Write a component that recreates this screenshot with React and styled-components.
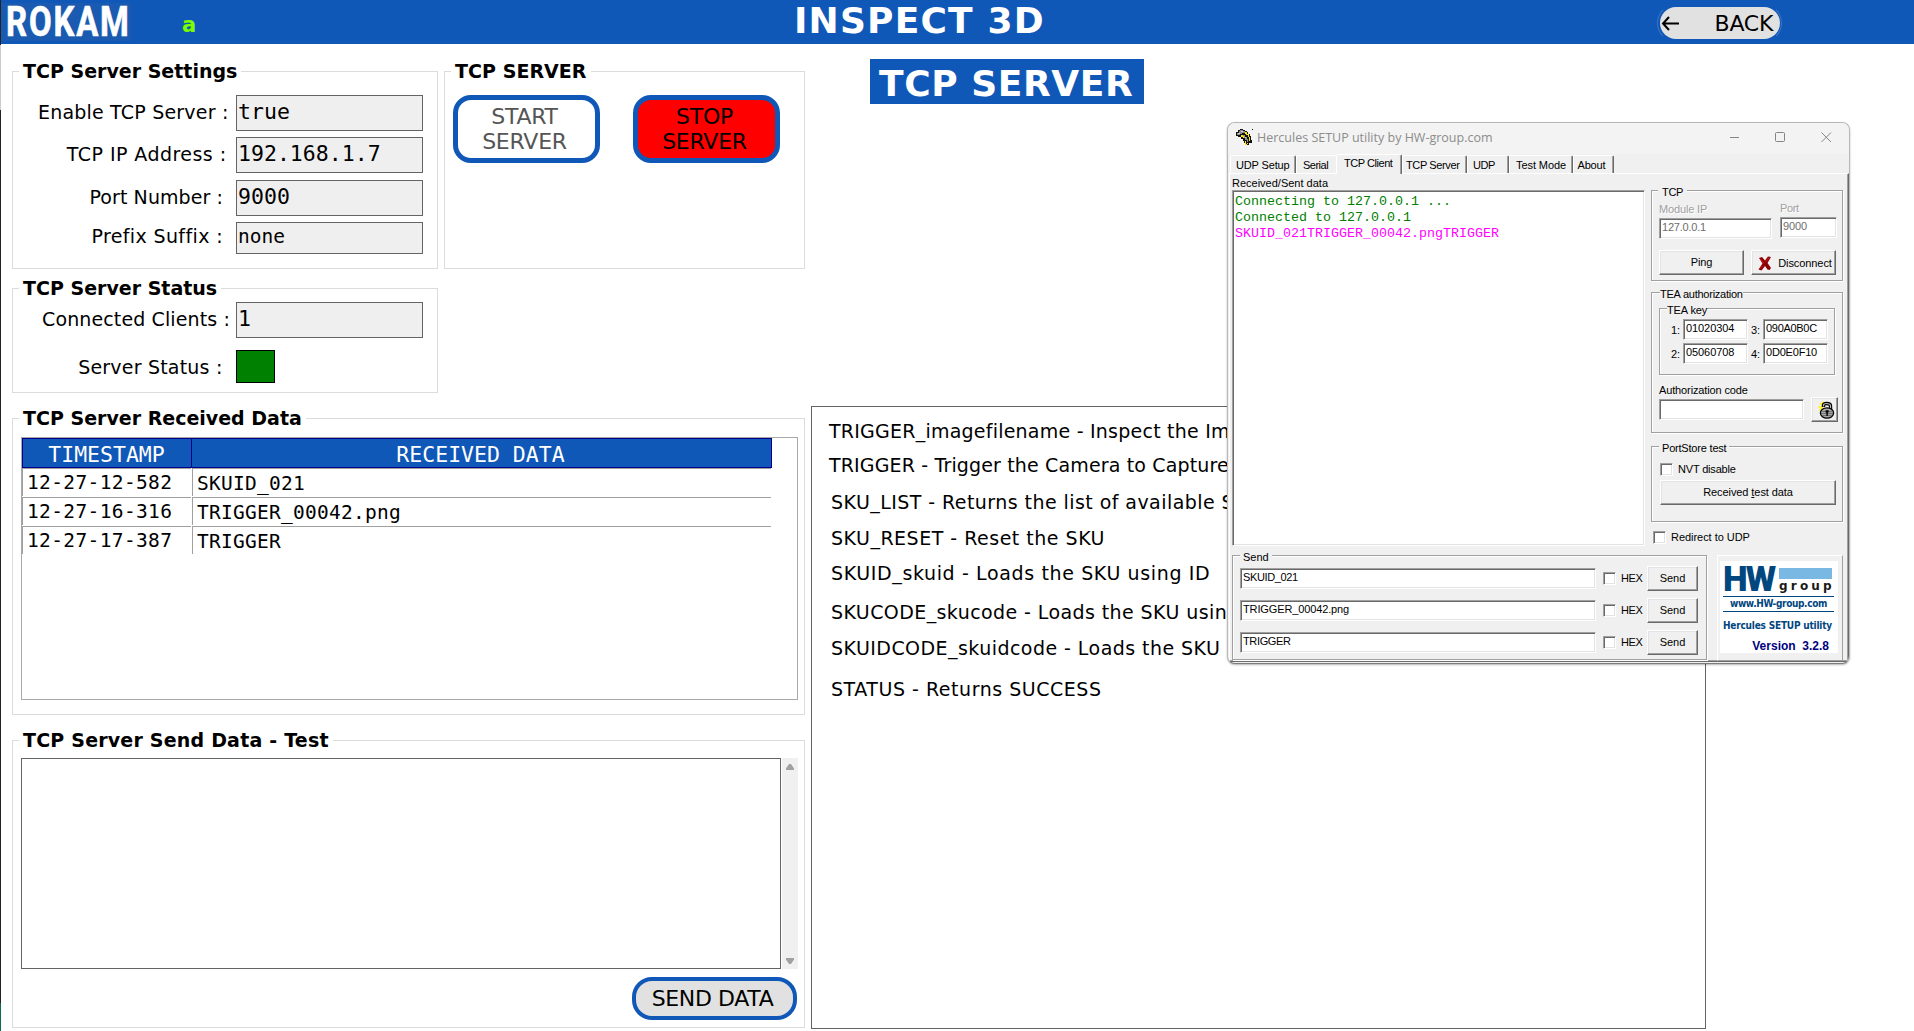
import React from 'react';
import styled, { createGlobalStyle, css } from 'styled-components';

const BLUE = '#1058b8';
const SANS = '"DejaVu Sans", Verdana, sans-serif';
const MONO = '"DejaVu Sans Mono", monospace';
const CLASSIC = '"Liberation Sans", Arial, sans-serif';

const GlobalStyle = createGlobalStyle`
  *, *::before, *::after { box-sizing: border-box; }
  body { margin: 0; background: #fff; color: #000; overflow: hidden; }
  button { margin: 0; padding: 0; font: inherit; color: inherit; }
`;

/* ---------- page frame ---------- */

const Screen = styled.div`
  position: relative;
  width: 1914px;
  height: 1031px;
  padding-left: 1px;
  display: flex;
  flex-direction: column;
  font-family: ${SANS};
  white-space: pre;
  background: linear-gradient(#222 0 45px, #ccc 45px 110px, #222 110px 1003px, #0b6b4f 1003px) 0 0 / 1px 100% no-repeat #fff;
`;

const Header = styled.header`
  display: grid;
  grid-template-columns: 181px 612px 863px auto;
  height: 44px;
  background: ${BLUE};
  color: #fff;
`;

const LogoPlate = styled.div`
  width: 130px;
  height: 38px;
  margin-top: 3px;
  padding-left: 4.5px;
  background: #1a5ab0;
`;

const LogoText = styled.div`
  font: 700 43px/37px Roboto, sans-serif;
  letter-spacing: 2.4px;
  transform: scaleX(0.765);
  transform-origin: left center;
  -webkit-text-stroke: 0.7px #fff;
`;

const UserMark = styled.div`
  font-size: 21px;
  font-weight: bold;
  line-height: 50px;
  color: #7cfc00;
`;

const AppTitle = styled.h1`
  margin: 0;
  font-size: 36px;
  line-height: 41px;
  letter-spacing: 1.2px;
`;

const BackRing = styled.div`
  width: 125px;
  height: 38px;
  margin-top: 4px;
  padding: 2px;
  border: 1px solid rgba(255, 255, 255, 0.12);
  border-color: transparent rgba(255, 255, 255, 0.18);
  border-radius: 19px;
`;

const BackButton = styled.button`
  display: flex;
  align-items: center;
  gap: 34.5px;
  width: 120px;
  height: 32px;
  border: 0;
  padding-left: 1px;
  border-radius: 16px;
  background: #e1e1e1;
  color: #000;
  font-size: 22px;
  letter-spacing: -0.2px;
`;

const Main = styled.main`
  display: grid;
  grid-template-columns: 793px 895px;
  column-gap: 6px;
  padding-left: 11px;
`;

const LeftColumn = styled.div`
  display: flex;
  flex-direction: column;
  gap: 25px;
  padding-top: 27px;
`;

const TopRow = styled.div`
  display: flex;
  align-items: flex-start;
  gap: 6px;
`;

const Stack = styled.div`
  display: flex;
  flex-direction: column;
  gap: 19px;
`;

const RightColumn = styled.div`
  display: flex;
  flex-direction: column;
  gap: 302px;
  padding-top: 15px;
`;

/* ---------- group boxes and form parts ---------- */

const Group = styled.section`
  display: flex;
  flex-direction: column;
  width: ${(p) => p.$w}px;
  height: ${(p) => p.$h}px;
  border: 1px solid #dcdcdc;
`;

const Legend = styled.h2`
  align-self: flex-start;
  margin: -13px 0 -11px 6px;
  padding: 0 4px;
  background: #fff;
  font-size: 19px;
  line-height: 24px;
  letter-spacing: ${(p) => p.$ls || 0}px;
`;

const FieldRow = styled.div`
  display: grid;
  grid-template-columns: 223px 187px;
  align-items: start;
  margin-top: ${(p) => p.$mt}px;
`;

const FieldLabel = styled.label`
  justify-self: end;
  padding-right: ${(p) => p.$pr}px;
  font-size: 19px;
  line-height: ${(p) => p.$lh || 34}px;
  letter-spacing: ${(p) => p.$ls}px;
`;

const ValueBox = styled.output`
  display: block;
  height: 36px;
  padding-left: 1px;
  border: 1px solid #646464;
  background: #efefef;
  font: 21.5px/31px ${MONO};
  letter-spacing: 0.02px;
  ${(p) => p.$small && css`
    height: 32px;
    font-size: 19.5px;
    line-height: 27px;
  `}
`;

const StatusLamp = styled.div`
  width: 39px;
  height: 33px;
  border: 1px solid #000;
  background: #008000;
`;

const ServerButtons = styled.div`
  display: flex;
  gap: 33px;
  padding: 23px 0 0 8px;
`;

const PillButton = styled.button`
  width: 147px;
  height: 68px;
  padding-right: 4px;
  border: 5px solid ${BLUE};
  border-radius: 18px;
  background: ${(p) => p.$bg || '#fff'};
  color: ${(p) => p.$fg || '#000'};
  font-size: 22px;
  line-height: 25px;
  letter-spacing: -0.25px;
`;

const SendDataButton = styled(PillButton)`
  align-self: flex-end;
  width: 165px;
  height: 43px;
  margin: 8px 7px 0 0;
  border-width: 4px;
  border-radius: 20px;
  letter-spacing: -0.36px;
`;

/* ---------- received data ---------- */

const DataGrid = styled.div`
  width: 777px;
  height: 263px;
  margin: 18px 0 0 8px;
  border: 1px solid #a8a8a8;
`;

const GridHead = styled.div`
  display: grid;
  grid-template-columns: 169px 1fr;
  width: 750px;
  height: 30px;
  border: 1px solid #00008b;
  background: ${BLUE};
  color: #fff;
  font: 21.5px/31px ${MONO};
  text-align: center;
`;

const HeadCell = styled.div`
  height: 28px;
  padding-right: 2px;
  & + & { border-left: 1px solid #00008b; margin-left: -1px; }
`;

const GridRow = styled.div`
  display: grid;
  grid-template-columns: 169px 579px;
  column-gap: 1px;
  height: 29px;
`;

const StampCell = styled.div`
  height: 28px;
  padding-left: 4px;
  border: solid #a0a0a0;
  border-width: 1px 0 0 1px;
  font: 19.5px/27px ${MONO};
  letter-spacing: 0.37px;
`;

const DataCell = styled(StampCell)`
  padding-left: 4px;
  line-height: 29px;
  letter-spacing: 0.26px;
`;

/* ---------- send data ---------- */

const EditorRow = styled.div`
  display: flex;
  gap: 1px;
  height: 211px;
  margin: 17px 0 0 8px;
`;

const Editor = styled.div`
  width: 760px;
  border: 1px solid #646464;
`;

const ScrollTrack = styled.div`
  display: flex;
  flex-direction: column;
  justify-content: space-between;
  align-items: center;
  width: 16px;
  padding: 6px 0 5px;
  background: #f0f0f0;
`;

/* ---------- command reference ---------- */

const PageBadge = styled.div`
  width: 274px;
  height: 45px;
  margin-left: 59px;
  padding-left: 9px;
  background: ${BLUE};
  color: #fff;
  font-size: 36px;
  font-weight: bold;
  line-height: 49px;
  letter-spacing: 0.6px;
`;

const CommandPanel = styled.section`
  height: 623px;
  border: 1px solid #646464;
  overflow: hidden;
`;

const Command = styled.p`
  margin: 0;
  padding-top: ${(p) => p.$gap}px;
  padding-left: ${(p) => p.$indent}px;
  font-size: 19px;
  line-height: 24px;
  letter-spacing: ${(p) => p.$ls}px;
`;

/* ---------- Hercules window ---------- */

const Window = styled.div`
  position: absolute;
  left: 1227px;
  top: 122px;
  width: 623px;
  height: 542px;
  border: 1px solid #b8b8b8;
  border-bottom-color: #7c7c7c;
  border-radius: 8px;
  overflow: hidden;
  background: #f0f0f0;
  font: 11px ${CLASSIC};
  box-shadow: 0 1px 2px rgba(0, 0, 0, 0.3);
`;

const TitleBar = styled.div`
  display: flex;
  align-items: flex-start;
  height: 31px;
  padding-left: 8px;
  background: #f3f3f3;
  & > svg { margin-top: 6px; }
`;

const WindowTitle = styled.div`
  flex: 1;
  padding-left: 4px;
  font: 12.5px/29px "Open Sans", sans-serif;
  color: #8c8c8c;
`;

const Caption = styled.button`
  display: flex;
  align-items: center;
  justify-content: center;
  width: 46px;
  height: 28px;
  border: 0;
  background: none;
  color: #858585;
`;

const TabBar = styled.div`
  display: flex;
  align-items: flex-end;
  height: 19px;
  padding-left: 2px;
`;

const Tab = styled.div`
  width: ${(p) => p.$w}px;
  height: 18px;
  padding-left: ${(p) => p.$pl}px;
  border: solid;
  border-color: #fff #696969 transparent #fff;
  border-width: 1px 1px 0 1px;
  border-radius: 2px 2px 0 0;
  box-shadow: inset -1px 0 #a0a0a0;
  line-height: 18px;
  letter-spacing: ${(p) => p.$ls}px;
  ${(p) => p.$open && css`
    height: 20px;
    margin-bottom: -1px;
    line-height: 16px;
    background: #f0f0f0;
    z-index: 1;
  `}
  ${(p) => p.$noEdge && css`
    border-right: 0;
    box-shadow: none;
  `}
`;

const Sheet = styled.div`
  width: 620px;
  height: 489px;
  margin-left: 1px;
  padding-left: 2px;
  border: solid;
  border-width: 1px 1px 1px 1px;
  border-color: #fff #696969 #696969 #fff;
  box-shadow: inset -1px -1px #a0a0a0;
`;

const SheetTop = styled.div`
  display: flex;
  gap: 7px;
  height: 381px;
`;

const SheetBottom = styled.div`
  display: flex;
  gap: 10px;
`;

const SideColumn = styled.div`
  display: flex;
  flex-direction: column;
  width: 191px;
  padding-top: 16px;
`;

const SmallText = styled.div`
  height: 16px;
  line-height: 16px;
  letter-spacing: ${(p) => p.$ls || 0}px;
`;

const MemoCaption = styled(SmallText)`
  line-height: 19px;
`;

const DimText = styled(SmallText)`
  color: #a0a0a0;
  text-shadow: 1px 1px #fff;
`;

const sunken = css`
  border: 1px solid;
  border-color: #a0a0a0 #fff #fff #a0a0a0;
  box-shadow: inset 1px 1px #696969, inset -1px -1px #e3e3e3;
  background: #fff;
`;

const Memo = styled.div`
  width: 413px;
  height: 356px;
  margin-right: -1px;
  padding: 3px 0 0 2px;
  ${sunken}
  font: 13.33px/16px "Liberation Mono", monospace;
`;

const MemoLine = styled.div`
  color: ${(p) => p.$c};
`;

const Input = styled.div`
  flex: none;
  width: ${(p) => p.$w}px;
  height: ${(p) => p.$h || 21}px;
  padding-left: 2px;
  ${sunken}
  color: ${(p) => (p.$dim ? '#6d6d6d' : '#000')};
  line-height: 17px;
  letter-spacing: ${(p) => p.$ls || 0}px;
`;

const Push = styled.button`
  display: flex;
  align-items: center;
  justify-content: center;
  gap: 6px;
  flex: none;
  width: ${(p) => p.$w}px;
  height: 25px;
  padding-bottom: 2px;
  border: 1px solid;
  border-color: #fff #696969 #696969 #fff;
  box-shadow: inset -1px -1px #a0a0a0, inset 1px 1px #e3e3e3;
  background: #f0f0f0;
  letter-spacing: -0.08px;
`;

const IconPush = styled(Push)`
  padding: 1px 0 0 3px;
`;

const Frame = styled.div`
  display: flex;
  flex-direction: column;
  align-items: flex-start;
  width: ${(p) => p.$w}px;
  height: ${(p) => p.$h}px;
  margin: ${(p) => p.$m || 0};
  border: 1px solid #a0a0a0;
  box-shadow: inset 1px 1px #fff, 1px 1px #fff;
`;

const FrameLegend = styled.div`
  margin: -7px 0 -9px ${(p) => p.$ml}px;
  padding: 0 ${(p) => p.$pad || 0}px;
  background: #f0f0f0;
  line-height: 16px;
  letter-spacing: ${(p) => p.$ls}px;
`;

const AddressRow = styled.div`
  display: flex;
  gap: 8px;
  padding: 10px 0 0 7px;
`;

const AddressCell = styled.div`
  display: flex;
  flex-direction: column;
  gap: 1px;
  margin-top: ${(p) => p.$mt || 0}px;
`;

const PushRow = styled.div`
  display: flex;
  gap: 7px;
  padding: 11px 0 0 7px;
`;

const KeyGrid = styled.div`
  display: grid;
  grid-template-columns: 12px 68px 12px 65px;
  grid-auto-rows: 21px;
  row-gap: 3px;
  padding: 10px 0 0 11px;
  line-height: 22px;
`;

const AuthRow = styled.div`
  display: flex;
  align-items: center;
  gap: 7px;
  margin: -1px 0 0 7px;
`;

const AuthLabel = styled(SmallText)`
  margin: 7px 0 0 7px;
`;

const CheckRow = styled.label`
  display: flex;
  align-items: center;
  gap: 5px;
  height: 13px;
  margin: ${(p) => p.$m || 0};
  line-height: 12px;
  letter-spacing: ${(p) => p.$ls || 0}px;
`;

const CheckText = styled.span`
  height: 13px;
`;

const Box = styled.span`
  width: 13px;
  height: 13px;
  ${sunken}
`;

const PortButton = styled(Push)`
  margin: 4px 0 0 8px;
  gap: 0;
`;

const SendLine = styled.div`
  display: grid;
  grid-template-columns: 363px 44px 51px;
  align-items: center;
  height: 25px;
  margin: ${(p) => (p.$first ? 10 : 7)}px 0 0 7px;
`;

const BrandPanel = styled.div`
  width: 126px;
  height: 106px;
  padding: 5px 0 0 2px;
  border: 1px solid;
  border-color: #fff #a0a0a0 #a0a0a0 #fff;
`;

const BrandCard = styled.div`
  width: 118px;
  height: 92px;
  background: #fff;
  color: #00467f;
  font: bold 10px "DejaVu Sans Condensed", "DejaVu Sans", sans-serif;
  font-stretch: condensed;
`;

const BrandTop = styled.div`
  display: flex;
  height: 35px;
  padding-left: 3px;
`;

const BrandLetters = styled.div`
  width: 56px;
  font: 900 35px/37px Roboto, sans-serif;
  letter-spacing: -1.8px;
`;

const BrandSide = styled.div`
  padding-top: 7px;
  font: bold 12px/14px "DejaVu Sans", sans-serif;
  letter-spacing: 3.2px;
  color: #1a1a1a;
`;

const BrandBar = styled.div`
  width: 53px;
  height: 11px;
  background: #7ab8e4;
`;

const BrandUrl = styled.div`
  width: 111px;
  height: 16px;
  margin-left: 3px;
  border: solid #00467f;
  border-width: 1px 0;
  line-height: 13px;
  letter-spacing: -0.35px;
  text-align: center;
`;

const BrandProduct = styled.div`
  height: 27px;
  padding-left: 3px;
  line-height: 27px;
  letter-spacing: -0.2px;
`;

const BrandVersion = styled.div`
  padding-right: 9px;
  font: bold 12px/14px ${CLASSIC};
  color: #000080;
  text-align: right;
`;

/* ---------- drawings ---------- */

const ArrowLeft = () => (
  <svg width="19" height="15" viewBox="0 0 19 15" fill="none" stroke="#000" strokeWidth="2">
    <path d="M8 1 L2 7.5 L8 14 M2 7.5 H18" />
  </svg>
);

const Triangle = ({ down }) => (
  <svg width="8" height="6" viewBox="0 0 8 6" fill="#a0a0a0">
    <path d={down ? 'M0 0H8V1.5L5 6H3L0 1.5Z' : 'M0 6H8V4.5L5 0H3L0 4.5Z'} />
  </svg>
);

const HerculesIcon = () => (
  <svg width="17" height="17" viewBox="0 0 17 17" shapeRendering="crispEdges">
    <path fill="#111" d="M4 0H7V1H9V2H11V3H12V5H14V7H15V11H16V14H13V16H9V14H8V12H7V10H5V8H2V7H0V3H2V1H4Z" />
    <path fill="#8c8c8c" d="M4 1H7V2H9V4H6V5H4V6H1V4H3V2H4ZM7 6H9V8H11V10H12V13H11V11H9V9H7Z" />
    <path fill="#ffe600" d="M9 3H11V5H13V8H12V6H10V5H9ZM5 6H7V7H8V9H7V8H5ZM13 8H14V12H13ZM9 12H10V15H11V14H12V15H11V16H9Z" />
    <path fill="#d0d0d0" d="M5 2H7V3H5ZM9 8H10V9H9ZM2 4H4V5H2Z" />
    <path fill="#111" d="M16 0H17V1H16Z" />
  </svg>
);

const RedCross = () => (
  <svg width="14" height="15" viewBox="0 0 14 15">
    <path fill="#8b0000" d="M1 2 L4 1 L7 4.5 L10 0.5 L13 1 L9.5 7 L13 12 L11.5 14 L9.5 13.5 L7 10 L3.5 14.5 L0.5 13.5 L4.5 7.5 Z" />
    <path fill="none" stroke="#d81818" strokeWidth="1" d="M2 2.5 L6 7.5 M11.5 1.5 L7.5 6 M5 9.5 L1.5 13" />
  </svg>
);

const LockIcon = () => (
  <svg width="17" height="18" viewBox="0 0 17 18">
    <path stroke="#ffee00" strokeWidth="1.3" d="M0.5 6 H5 M2 2 L5 5 M4.5 0.5 V4 M1 9.5 L4 7" />
    <path fill="none" stroke="#000" strokeWidth="3.4" d="M5.5 6 V4.5 Q5.5 2.5 8.5 2.5 Q12.5 2.5 12.5 5 V9" />
    <path fill="none" stroke="#b8b8b8" strokeWidth="1.2" d="M5.5 5.5 V4.5 Q5.5 2.5 8.5 2.5 Q12.5 2.5 12.5 5 V9" />
    <ellipse cx="9" cy="12" rx="6.6" ry="5.2" fill="#a8a8a8" stroke="#000" strokeWidth="1.3" />
    <path stroke="#666" strokeWidth="0.8" d="M3 10.5 H15 M3 12.5 H15 M4 14.5 H14" />
    <path fill="#000" d="M7.6 9.3 H10.6 V11.6 H9.8 V15 H8.4 V11.6 H7.6 Z" />
  </svg>
);

/* ---------- data ---------- */

const received = [
  ['12-27-12-582', 'SKUID_021'],
  ['12-27-16-316', 'TRIGGER_00042.png'],
  ['12-27-17-387', 'TRIGGER'],
];

const commands = [
  { text: 'TRIGGER_imagefilename - Inspect the Im', gap: 12, indent: 17, ls: 0.23 },
  { text: 'TRIGGER - Trigger the Camera to Capture', gap: 10, indent: 17, ls: 0.15 },
  { text: 'SKU_LIST - Returns the list of available S', gap: 13, indent: 19, ls: 0.44 },
  { text: 'SKU_RESET - Reset the SKU', gap: 12, indent: 19, ls: 0.5 },
  { text: 'SKUID_skuid - Loads the SKU using ID', gap: 11, indent: 19, ls: 0.63 },
  { text: 'SKUCODE_skucode - Loads the SKU usin', gap: 15, indent: 19, ls: 0.41 },
  { text: 'SKUIDCODE_skuidcode - Loads the SKU', gap: 12, indent: 19, ls: 0.45 },
  { text: 'STATUS - Returns SUCCESS', gap: 17, indent: 19, ls: 0.53 },
];

const tabs = [
  { name: 'UDP Setup', w: 66, pl: 5, ls: -0.15 },
  { name: 'Serial', w: 40, pl: 6, ls: -0.5, noEdge: true },
  { name: 'TCP Client', w: 66, pl: 7, ls: -0.46, open: true },
  { name: 'TCP Server', w: 65, pl: 3, ls: -0.38 },
  { name: 'UDP', w: 42, pl: 5, ls: -0.44 },
  { name: 'Test Mode', w: 64, pl: 6, ls: -0.08 },
  { name: 'About', w: 41, pl: 3.5, ls: -0.17 },
];

const sends = [
  { text: 'SKUID_021', ls: -0.37 },
  { text: 'TRIGGER_00042.png', ls: -0.13 },
  { text: 'TRIGGER', ls: -0.36 },
];

/* ---------- sections ---------- */

const HerculesWindow = () => (
  <Window>
    <TitleBar>
      <HerculesIcon />
      <WindowTitle>Hercules SETUP utility by HW-group.com</WindowTitle>
      <Caption aria-label="Minimize">
        <svg width="11" height="11" stroke="currentColor"><path d="M1 5.5H10" /></svg>
      </Caption>
      <Caption aria-label="Maximize">
        <svg width="11" height="11" stroke="currentColor" fill="none"><rect x="0.5" y="0.5" width="9" height="9" rx="1" /></svg>
      </Caption>
      <Caption aria-label="Close">
        <svg width="11" height="11" stroke="currentColor"><path d="M0.5 0.5L10 10M10 0.5L0.5 10" /></svg>
      </Caption>
    </TitleBar>
    <TabBar>
      {tabs.map((t) => (
        <Tab key={t.name} $w={t.w} $pl={t.pl} $ls={t.ls} $open={t.open} $noEdge={t.noEdge}>{t.name}</Tab>
      ))}
    </TabBar>
    <Sheet>
      <SheetTop>
        <div>
          <MemoCaption $ls={0}>Received/Sent data</MemoCaption>
          <Memo>
            <MemoLine $c="#008000">Connecting to 127.0.0.1 ...</MemoLine>
            <MemoLine $c="#008000">Connected to 127.0.0.1</MemoLine>
            <MemoLine $c="#ff00ff">SKUID_021TRIGGER_00042.pngTRIGGER</MemoLine>
          </Memo>
        </div>
        <SideColumn>
          <Frame $w={192} $h={91}>
            <FrameLegend $ml={6} $pad={4} $ls={-0.33}>TCP</FrameLegend>
            <AddressRow>
              <AddressCell>
                <DimText $ls={-0.15}>Module IP</DimText>
                <Input $w={113} $h={21} $dim $ls={-0.22}>127.0.0.1</Input>
              </AddressCell>
              <AddressCell $mt={-1}>
                <DimText $ls={-0.37}>Port</DimText>
                <Input $w={57} $h={21} $dim $ls={-0.12}>9000</Input>
              </AddressCell>
            </AddressRow>
            <PushRow>
              <Push $w={85}>Ping</Push>
              <IconPush $w={85}><RedCross />Disconnect</IconPush>
            </PushRow>
          </Frame>
          <Frame $w={192} $h={141} $m="11px 0 0">
            <FrameLegend $ml={8} $ls={-0.24}>TEA authorization</FrameLegend>
            <Frame $w={176} $h={67} $m="15px 0 0 7px">
              <FrameLegend $ml={7} $ls={-0.1}>TEA key</FrameLegend>
              <KeyGrid>
                <span>1:</span><Input $w={65} $ls={-0.08}>01020304</Input>
                <span>3:</span><Input $w={65} $ls={-0.3}>090A0B0C</Input>
                <span>2:</span><Input $w={65} $ls={-0.08}>05060708</Input>
                <span>4:</span><Input $w={65} $ls={-0.2}>0D0E0F10</Input>
              </KeyGrid>
            </Frame>
            <AuthLabel $ls={-0.13}>Authorization code</AuthLabel>
            <AuthRow>
              <Input $w={145} />
              <IconPush $w={27} aria-label="Authorize"><LockIcon /></IconPush>
            </AuthRow>
          </Frame>
          <Frame $w={192} $h={76} $m="13px 0 0">
            <FrameLegend $ml={7} $pad={3} $ls={-0.2}>PortStore test</FrameLegend>
            <CheckRow $m="16px 0 0 8px" $ls={-0.18}><Box /><CheckText>NVT disable</CheckText></CheckRow>
            <PortButton $w={176}>Received <u>t</u>est data</PortButton>
          </Frame>
          <CheckRow $m="9px 0 0 2px" $ls={-0.04}><Box /><CheckText>Redirect to UDP</CheckText></CheckRow>
        </SideColumn>
      </SheetTop>
      <SheetBottom>
        <Frame $w={475} $h={105}>
          <FrameLegend $ml={7} $pad={3} $ls={0}>Send</FrameLegend>
          {sends.map((s, i) => (
            <SendLine key={s.text} $first={i === 0}>
              <Input $w={356} $ls={s.ls}>{s.text}</Input>
              <CheckRow $ls={-0.4}><Box /><CheckText>HEX</CheckText></CheckRow>
              <Push $w={51}>Send</Push>
            </SendLine>
          ))}
        </Frame>
        <BrandPanel>
          <BrandCard>
            <BrandTop>
              <BrandLetters>HW</BrandLetters>
              <BrandSide><BrandBar />group</BrandSide>
            </BrandTop>
            <BrandUrl>www.HW-group.com</BrandUrl>
            <BrandProduct>Hercules SETUP utility</BrandProduct>
            <BrandVersion>Version  3.2.8</BrandVersion>
          </BrandCard>
        </BrandPanel>
      </SheetBottom>
    </Sheet>
  </Window>
);

export default function App() {
  return (
    <>
      <GlobalStyle />
      <Screen>
        <Header>
          <LogoPlate><LogoText>ROKAM</LogoText></LogoPlate>
          <UserMark>a</UserMark>
          <AppTitle>INSPECT 3D</AppTitle>
          <BackRing>
            <BackButton><ArrowLeft />BACK</BackButton>
          </BackRing>
        </Header>
        <Main>
          <LeftColumn>
            <TopRow>
              <Stack>
                <Group $w={426} $h={198}>
                  <Legend>TCP Server Settings</Legend>
                  <FieldRow $mt={23}>
                    <FieldLabel $pr={7.5} $ls={0.2}>Enable TCP Server :</FieldLabel>
                    <ValueBox>true</ValueBox>
                  </FieldRow>
                  <FieldRow $mt={6}>
                    <FieldLabel $pr={9.5} $ls={0.45}>TCP IP Address :</FieldLabel>
                    <ValueBox>192.168.1.7</ValueBox>
                  </FieldRow>
                  <FieldRow $mt={7}>
                    <FieldLabel $pr={13} $ls={0.08}>Port Number :</FieldLabel>
                    <ValueBox>9000</ValueBox>
                  </FieldRow>
                  <FieldRow $mt={6}>
                    <FieldLabel $pr={13} $ls={0.38} $lh={28}>Prefix Suffix :</FieldLabel>
                    <ValueBox $small>none</ValueBox>
                  </FieldRow>
                </Group>
                <Group $w={426} $h={105}>
                  <Legend>TCP Server Status</Legend>
                  <FieldRow $mt={13}>
                    <FieldLabel $pr={6} $ls={0.12}>Connected Clients :</FieldLabel>
                    <ValueBox>1</ValueBox>
                  </FieldRow>
                  <FieldRow $mt={12}>
                    <FieldLabel $pr={13.5} $ls={0.2}>Server Status :</FieldLabel>
                    <StatusLamp />
                  </FieldRow>
                </Group>
              </Stack>
              <Group $w={361} $h={198}>
                <Legend $ls={0.05}>TCP SERVER</Legend>
                <ServerButtons>
                  <PillButton $fg="#555">START<br />SERVER</PillButton>
                  <PillButton $bg="#ff0000">STOP<br />SERVER</PillButton>
                </ServerButtons>
              </Group>
            </TopRow>
            <Group $w={793} $h={297}>
              <Legend>TCP Server Received Data</Legend>
              <DataGrid>
                <GridHead>
                  <HeadCell>TIMESTAMP</HeadCell>
                  <HeadCell>RECEIVED DATA</HeadCell>
                </GridHead>
                {received.map(([stamp, data]) => (
                  <GridRow key={stamp}>
                    <StampCell>{stamp}</StampCell>
                    <DataCell>{data}</DataCell>
                  </GridRow>
                ))}
              </DataGrid>
            </Group>
            <Group $w={793} $h={288}>
              <Legend $ls={0.2}>TCP Server Send Data - Test</Legend>
              <EditorRow>
                <Editor />
                <ScrollTrack><Triangle /><Triangle down /></ScrollTrack>
              </EditorRow>
              <SendDataButton $bg="#e1e1e1">SEND DATA</SendDataButton>
            </Group>
          </LeftColumn>
          <RightColumn>
            <PageBadge>TCP SERVER</PageBadge>
            <CommandPanel>
              {commands.map((c) => (
                <Command key={c.text} $gap={c.gap} $indent={c.indent} $ls={c.ls}>{c.text}</Command>
              ))}
            </CommandPanel>
          </RightColumn>
        </Main>
        <HerculesWindow />
      </Screen>
    </>
  );
}
